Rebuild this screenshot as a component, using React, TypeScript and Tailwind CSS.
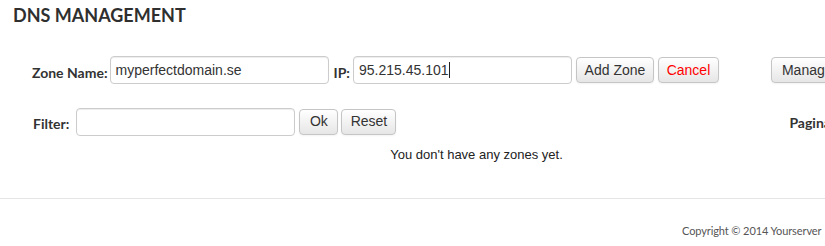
import React from "react";

const btn =
  "h-[26px] px-[10px] flex items-center rounded-[4px] border border-[#c5c5c5] bg-gradient-to-b from-white to-[#e6e6e6] text-[14px] text-[#333] shadow-[inset_0_1px_0_rgba(255,255,255,0.2),0_1px_2px_rgba(0,0,0,0.05)] whitespace-nowrap";

const field =
  "h-[28px] w-[219px] rounded-[4px] border border-[#cccccc] bg-white px-[5px] flex items-center text-[14px] text-[#333] shadow-[inset_0_1px_1px_rgba(0,0,0,0.075)]";

const label = "text-[14px] font-bold text-[#333] font-['Lato',sans-serif] whitespace-nowrap";

function App() {
  return (
    <div className="w-full h-[246px] overflow-hidden bg-white font-['Liberation_Sans',Arial,sans-serif]">
      <div className="w-[953px]">
        <h1 className="pl-[13px] pt-[4px] text-[18px] leading-[22px] font-bold text-[#2f2f2f] font-['Lato',sans-serif]">
          DNS MANAGEMENT
        </h1>

        <div className="flex items-center pl-[32px] mt-[30px] h-[28px]">
          <span className={label + " mr-[2px] mt-[4px]"}>Zone Name:</span>
          <div className={field}>myperfectdomain.se</div>
          <span className={label + " ml-[5px] mr-[3px] mt-[4px]"}>IP:</span>
          <div
            className={
              field +
              " border-[#7fb2ea] shadow-[inset_0_1px_1px_rgba(0,0,0,0.075),0_0_6px_rgba(82,168,236,0.6)]"
            }
          >
            95.215.45.101
            <span className="ml-[1px] inline-block h-[16px] w-px bg-[#222]" />
          </div>
          <button className={btn + " ml-[4px] w-[78px] justify-center"}>Add Zone</button>
          <button className={btn + " ml-[4px] w-[61px] justify-center text-[#f00]"}>Cancel</button>
          <button className={btn + " ml-[52px]"}>Manage zones</button>
        </div>

        <div className="flex items-center pl-[33px] mt-[24px] h-[27px]">
          <span className={label + " mr-[7px] mt-[4px]"}>Filter:</span>
          <div className={field + " h-[27px]"} />
          <button className={btn + " ml-[4px] w-[39px] justify-center"}>Ok</button>
          <button className={btn + " ml-[3px] w-[55px] justify-center"}>Reset</button>
          <span className={label + " ml-[393px] mt-[2px]"}>Pagination:</span>
        </div>

        <p className="mt-[10px] text-center text-[13px] text-[#222]">
          You don't have any zones yet.
        </p>
      </div>

      <div className="mt-[33px] border-t border-[#e5e5e5]" />
      <p className="pl-[682px] pt-[25px] text-[11px] leading-[14px] tracking-[-0.1px] text-[#555] whitespace-nowrap font-['Lato',sans-serif]">
        Copyright © 2014 Yourserver
      </p>
    </div>
  );
}

export default App;
